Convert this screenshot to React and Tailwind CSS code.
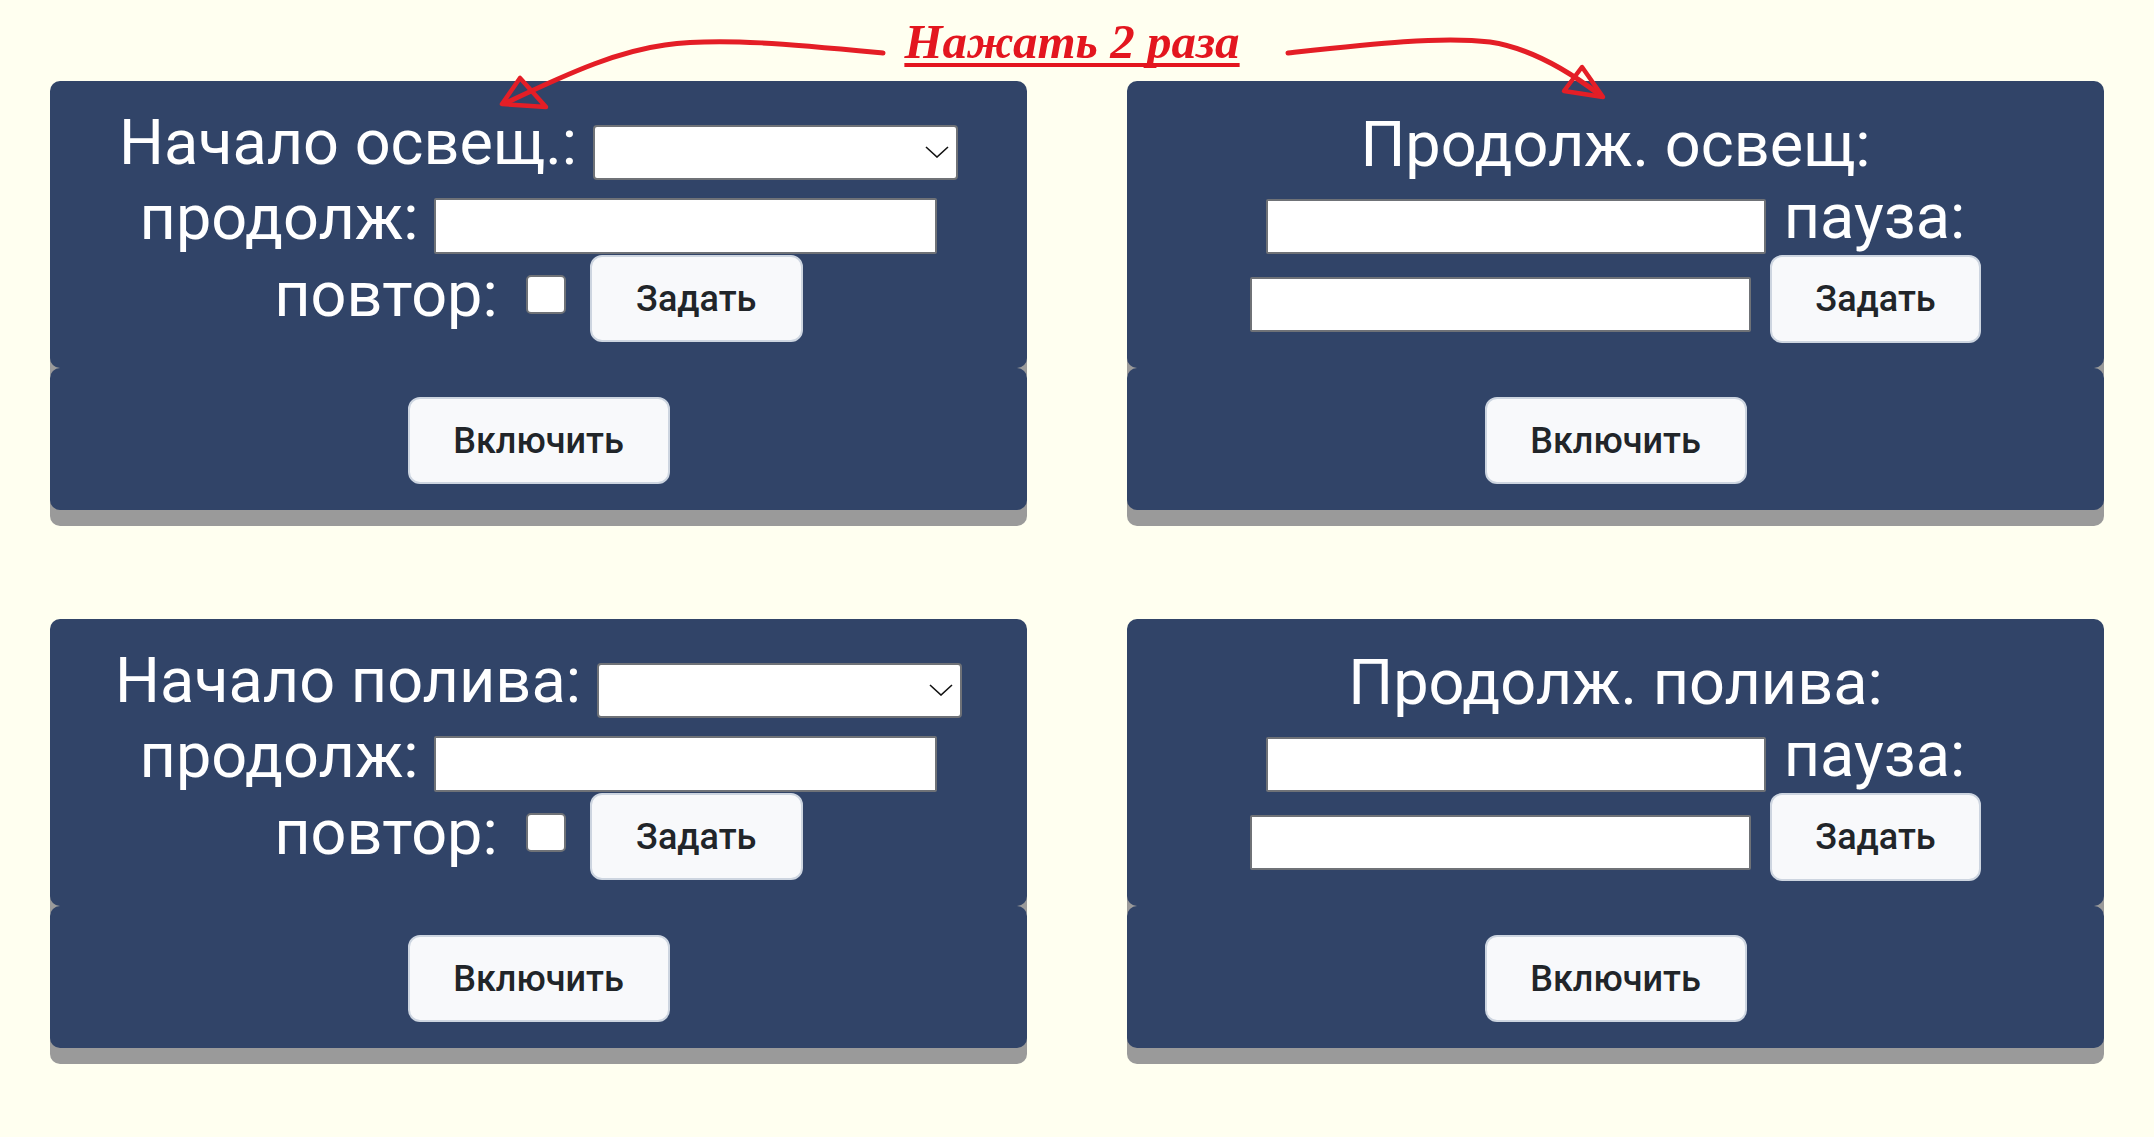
import React from "react";

function Btn({ children, w, h }) {
  return (
    <button
      className={`${w} ${h} shrink-0 rounded-[12px] border-2 border-[#cdd5e0] bg-[#f8f9fb] text-[36px] font-medium leading-none text-[#212529] [font-family:Roboto,sans-serif]`}
    >
      {children}
    </button>
  );
}

function Label({ children, cls = "" }) {
  return (
    <span
      className={`shrink-0 whitespace-nowrap text-[63px] leading-[61px] text-white [font-family:Roboto,sans-serif] ${cls}`}
    >
      {children}
    </span>
  );
}

function TextInput({ w, h, cls = "" }) {
  return (
    <input
      type="text"
      className={`${w} ${h} ${cls} shrink-0 rounded-[2px] border-2 border-[#6f7277] bg-white outline-none`}
    />
  );
}

function Select({ cls = "" }) {
  return (
    <div className={`relative shrink-0 ${cls}`}>
      <select className="block h-[55px] w-[365px] appearance-none rounded-[4px] border-2 border-[#6f7277] bg-white outline-none" />
      <svg
        className="pointer-events-none absolute right-[9px] top-[21px]"
        width="24"
        height="12"
        viewBox="0 0 24 12"
        fill="none"
      >
        <path d="M1 1 L12 11 L23 1" stroke="#111" strokeWidth="1.6" />
      </svg>
    </div>
  );
}

function Lower() {
  return (
    <div className="flex h-[142px] items-center justify-center rounded-[10px] bg-[#314468] pt-[3px] shadow-[0_16px_0_#9a9a9a]">
      <Btn w="w-[262px]" h="h-[87px]">Включить</Btn>
    </div>
  );
}

function StartCard({ title }) {
  return (
    <div className="flex flex-col">
      <div className="flex h-[287px] flex-col items-center rounded-[10px] bg-[#314468] pt-[31px] shadow-[0_16px_0_#9a9a9a]">
        <div className="flex h-[75px] items-start">
          <Label>{title}</Label>
          <Select cls="ml-[16px] mt-[13px]" />
        </div>
        <div className="flex h-[68px] items-start">
          <Label>продолж:</Label>
          <TextInput w="w-[503px]" h="h-[56px]" cls="ml-[16px] mt-[11px]" />
        </div>
        <div className="flex items-start">
          <Label cls="mt-[9px]">повтор:</Label>
          <input
            type="checkbox"
            className="ml-[28px] mt-[20px] h-[39px] w-[40px] shrink-0 appearance-none rounded-[5px] border-2 border-[#6f7277] bg-white"
          />
          <div className="ml-[24px]">
            <Btn w="w-[213px]" h="h-[87px]">Задать</Btn>
          </div>
        </div>
      </div>
      <Lower />
    </div>
  );
}

function DurCard({ title }) {
  return (
    <div className="flex flex-col">
      <div className="flex h-[287px] flex-col items-center rounded-[10px] bg-[#314468] pt-[33px] shadow-[0_16px_0_#9a9a9a]">
        <div className="flex h-[72px] items-start">
          <Label>{title}</Label>
        </div>
        <div className="flex h-[69px] items-start">
          <TextInput w="w-[500px]" h="h-[55px]" cls="mt-[13px]" />
          <Label cls="ml-[18px]">пауза:</Label>
        </div>
        <div className="flex items-start">
          <TextInput w="w-[501px]" h="h-[55px]" cls="mt-[22px]" />
          <div className="ml-[19px]">
            <Btn w="w-[211px]" h="h-[88px]">Задать</Btn>
          </div>
        </div>
      </div>
      <Lower />
    </div>
  );
}

export default function App() {
  return (
    <div className="relative min-h-[1137px] w-full bg-[#fffff0]">
      <div className="flex h-[81px] justify-center pt-[17px]">
        <span className="mr-[10px] text-[49px] font-bold italic leading-[49px] text-[#e3161f] underline underline-offset-[5px] [text-decoration-thickness:4px] [text-decoration-skip-ink:none] [font-family:Liberation_Serif,serif]">
          Нажать 2 раза
        </span>
      </div>
      <div className="grid grid-cols-[977px_977px] gap-x-[100px] gap-y-[109px] px-[50px]">
        <StartCard title="Начало освещ.:" />
        <DurCard title="Продолж. освещ:" />
        <StartCard title="Начало полива:" />
        <DurCard title="Продолж. полива:" />
      </div>
      <svg
        className="pointer-events-none absolute left-0 top-0"
        width="2154"
        height="1137"
        viewBox="0 0 2154 1137"
        fill="none"
      >
        <g stroke="#e41e26" strokeLinecap="round" strokeLinejoin="round">
          <path d="M 883 53 C 800 45, 720 37, 665 45 C 620 51, 575 70, 508 102" strokeWidth="5" />
          <path d="M 520 78 L 502 104 L 546 107 Z" strokeWidth="4.5" />
          <path d="M 1288 53 C 1370 44, 1440 36, 1490 42 C 1530 48, 1570 72, 1600 95" strokeWidth="5" />
          <path d="M 1582 67 L 1564 91 L 1603 97 Z" strokeWidth="4.5" />
        </g>
      </svg>
    </div>
  );
}
